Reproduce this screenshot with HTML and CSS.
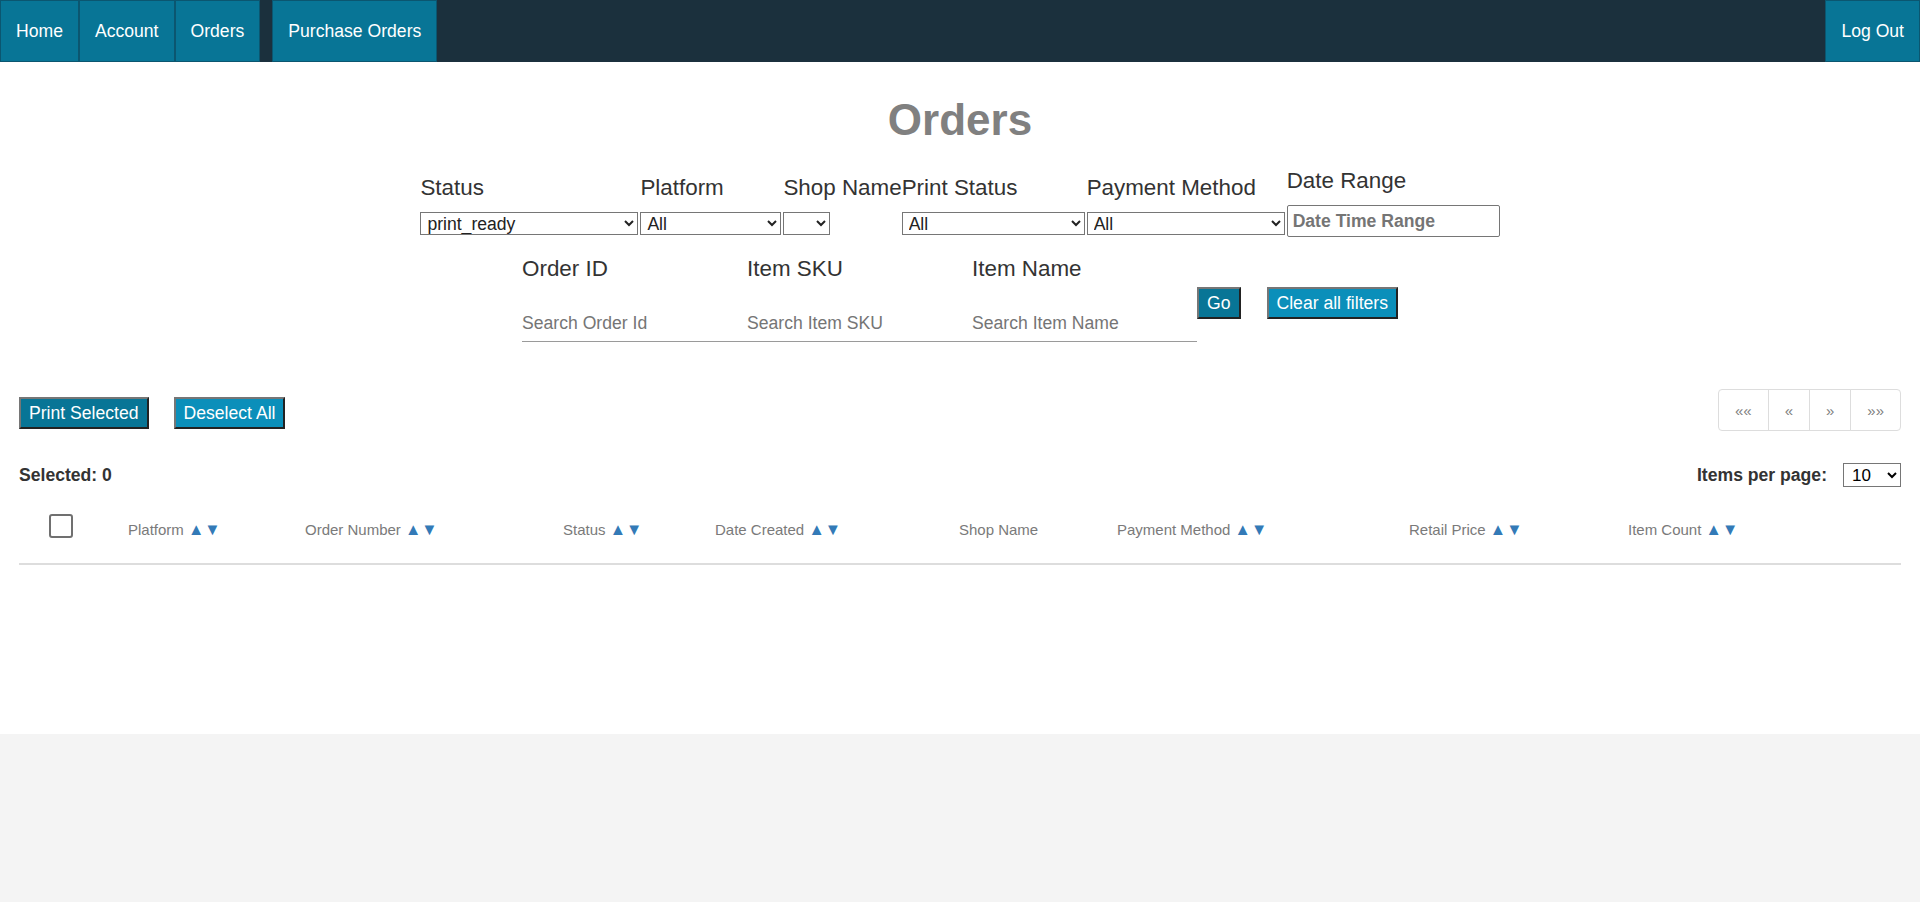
FILE: index.html
```html
<!DOCTYPE html>
<html lang="en">
<head>
<meta charset="utf-8">
<title>Orders</title>
<link rel="stylesheet" href="styles.css">
</head>
<body>
<header class="topbar">
  <nav class="nav-left">
    <a class="nav-item" href="#">Home</a>
    <a class="nav-item" href="#">Account</a>
    <a class="nav-item" href="#">Orders</a>
    <a class="nav-item nav-item-spaced" href="#">Purchase Orders</a>
  </nav>
  <a class="nav-item" href="#">Log Out</a>
</header>

<main class="page">
  <h1 class="title">Orders</h1>

  <div class="filters-row">
    <div class="filter">
      <label class="filter-label">Status</label>
      <select class="sel sel-status"><option>print_ready</option></select>
    </div>
    <div class="filter">
      <label class="filter-label">Platform</label>
      <select class="sel sel-platform"><option>All</option></select>
    </div>
    <div class="filter">
      <label class="filter-label">Shop Name</label>
      <select class="sel sel-shop"><option></option></select>
    </div>
    <div class="filter">
      <label class="filter-label">Print Status</label>
      <select class="sel sel-print"><option>All</option></select>
    </div>
    <div class="filter">
      <label class="filter-label">Payment Method</label>
      <select class="sel sel-payment"><option>All</option></select>
    </div>
    <div class="filter filter-date">
      <label class="filter-label">Date Range</label>
      <input class="date-input" type="text" placeholder="Date Time Range">
    </div>
  </div>

  <div class="search-row">
    <div class="search-field">
      <label class="filter-label">Order ID</label>
      <input class="search-input" type="text" placeholder="Search Order Id">
    </div>
    <div class="search-field">
      <label class="filter-label">Item SKU</label>
      <input class="search-input" type="text" placeholder="Search Item SKU">
    </div>
    <div class="search-field">
      <label class="filter-label">Item Name</label>
      <input class="search-input" type="text" placeholder="Search Item Name">
    </div>
    <button class="btn btn-dark btn-go">Go</button>
    <button class="btn btn-light btn-clear">Clear all filters</button>
  </div>

  <div class="actions-row">
    <div class="actions">
      <button class="btn btn-dark">Print Selected</button>
      <button class="btn btn-light btn-deselect">Deselect All</button>
    </div>
    <ul class="pager">
      <li class="pager-cell">&laquo;&laquo;</li>
      <li class="pager-cell">&laquo;</li>
      <li class="pager-cell">&raquo;</li>
      <li class="pager-cell">&raquo;&raquo;</li>
    </ul>
  </div>

  <div class="meta-row">
    <span class="selected-count">Selected: 0</span>
    <div class="per-page">
      <label class="per-page-label">Items per page:</label>
      <select class="per-page-select"><option>10</option></select>
    </div>
  </div>

  <div class="table-head">
    <div class="th th-check"><input class="checkbox" type="checkbox"></div>
    <div class="th">Platform <span class="sort">&#9650;&#9660;</span></div>
    <div class="th">Order Number <span class="sort">&#9650;&#9660;</span></div>
    <div class="th">Status <span class="sort">&#9650;&#9660;</span></div>
    <div class="th">Date Created <span class="sort">&#9650;&#9660;</span></div>
    <div class="th">Shop Name</div>
    <div class="th">Payment Method <span class="sort">&#9650;&#9660;</span></div>
    <div class="th">Retail Price <span class="sort">&#9650;&#9660;</span></div>
    <div class="th">Item Count <span class="sort">&#9650;&#9660;</span></div>
  </div>
</main>
</body>
</html>
```

FILE: styles.css
```css
* {
  box-sizing: border-box;
}

html, body {
  margin: 0;
  padding: 0;
}

body {
  background: #f4f4f4;
  font-family: "Liberation Sans", Arial, sans-serif;
  color: #333;
}

/* ---------- top bar ---------- */
.topbar {
  height: 62px;
  background: #1b303d;
  display: flex;
  justify-content: space-between;
}

.nav-left {
  display: flex;
}

.nav-item {
  display: flex;
  align-items: center;
  height: 62px;
  padding: 0 15px;
  background: #087596;
  border: 1px solid #0b5670;
  color: #fff;
  font-size: 17.6px;
  text-decoration: none;
  white-space: nowrap;
}

.nav-item-spaced {
  margin-left: 12px;
}

/* ---------- page ---------- */
.page {
  background: #fff;
  min-height: 672px;
  padding: 33px 0 20px;
}

.title {
  margin: 0;
  font-size: 44px;
  line-height: 50px;
  font-weight: bold;
  color: #808080;
  text-align: center;
}

/* ---------- filters ---------- */
.filters-row {
  display: flex;
  justify-content: center;
  align-items: flex-end;
  margin-top: 23px;
}

.filter {
  flex: none;
  display: flex;
  flex-direction: column;
  align-items: flex-start;
}

.filter-label {
  display: block;
  font-size: 22.4px;
  line-height: 26px;
  color: #333;
  white-space: nowrap;
  margin-bottom: 11px;
}

.sel {
  height: 23px;
  font-family: "Liberation Sans", Arial, sans-serif;
  font-size: 17.6px;
  color: #222;
  border: 1px solid #767676;
  border-radius: 0;
  background: #fff;
  padding: 0 2px;
  margin-right: 2px;
}

.sel-status { width: 218px; }
.sel-platform { width: 141px; }
.sel-shop { width: 47px; }
.sel-print { width: 183px; }
.sel-payment { width: 198px; }

.filter-date {
  margin-bottom: -2px;
}

.date-input {
  width: 213px;
  height: 32px;
  border: 1px solid #767676;
  border-radius: 2px;
  padding: 0 5px;
  font-family: "Liberation Sans", Arial, sans-serif;
  font-size: 17.6px;
  font-weight: bold;
}

.date-input::placeholder {
  color: #757575;
  font-weight: bold;
}

/* ---------- search row ---------- */
.search-row {
  display: flex;
  justify-content: center;
  align-items: flex-start;
  margin-top: 21px;
}

.search-field {
  width: 225px;
  display: flex;
  flex-direction: column;
}

.search-field .filter-label {
  margin-bottom: 23px;
}

.search-input {
  width: 225px;
  height: 37px;
  border: none;
  border-bottom: 1px solid #9a9a9a;
  padding: 0;
  font-family: "Liberation Sans", Arial, sans-serif;
  font-size: 17.6px;
  outline: none;
}

.search-input::placeholder {
  color: #757575;
}

.btn {
  font-family: "Liberation Sans", Arial, sans-serif;
  font-size: 17.6px;
  line-height: 20px;
  color: #fff;
  padding: 4px 8px;
  border-width: 2px;
  border-style: solid;
  border-color: #767676 #222 #222 #767676;
  border-radius: 0;
  cursor: pointer;
}

.btn-dark {
  background: #087596;
}

.btn-light {
  background: #0b8fba;
}

.btn-go {
  margin-top: 31px;
}

.btn-clear {
  margin-top: 31px;
  margin-left: 26px;
}

/* ---------- actions row ---------- */
.actions-row {
  display: flex;
  justify-content: space-between;
  align-items: flex-start;
  margin-top: 47px;
  padding: 0 19px;
}

.actions {
  display: flex;
  gap: 25px;
  margin-top: 8px;
}

.pager {
  display: flex;
  list-style: none;
  margin: 0;
  padding: 0;
}

.pager-cell {
  height: 42px;
  display: flex;
  align-items: center;
  padding: 0 16px;
  font-size: 15px;
  color: #808080;
  border: 1px solid #dddddd;
  margin-left: -1px;
  background: #fff;
}

.pager-cell:first-child {
  margin-left: 0;
  border-radius: 4px 0 0 4px;
}

.pager-cell:last-child {
  border-radius: 0 4px 4px 0;
}

/* ---------- meta row ---------- */
.meta-row {
  display: flex;
  justify-content: space-between;
  align-items: center;
  height: 24px;
  margin-top: 32px;
  padding: 0 19px;
}

.selected-count {
  font-size: 17.6px;
  font-weight: bold;
  color: #333;
}

.per-page {
  display: flex;
  align-items: center;
  gap: 16px;
}

.per-page-label {
  font-size: 17.6px;
  font-weight: bold;
  color: #333;
}

.per-page-select {
  width: 58px;
  height: 24px;
  font-family: "Liberation Sans", Arial, sans-serif;
  font-size: 17px;
  border: 1px solid #767676;
  border-radius: 0;
  background: #fff;
  padding: 0 4px;
}

/* ---------- table head ---------- */
.table-head {
  display: grid;
  grid-template-columns: 109px 177px 258px 152px 244px 158px 292px 219px 271px;
  align-items: center;
  height: 69px;
  margin: 9px 19px 0;
  border-bottom: 2px solid #dddddd;
}

.th {
  font-size: 15px;
  color: #7a7a7a;
  white-space: nowrap;
}

.th-check {
  padding-left: 30px;
  display: flex;
  align-items: center;
}

.checkbox {
  appearance: none;
  -webkit-appearance: none;
  width: 24px;
  height: 24px;
  margin: 0 0 8px;
  border: 2px solid #707070;
  border-radius: 3px;
  background: #fff;
}

.sort {
  color: #337ab7;
  font-size: 16.5px;
}
```
